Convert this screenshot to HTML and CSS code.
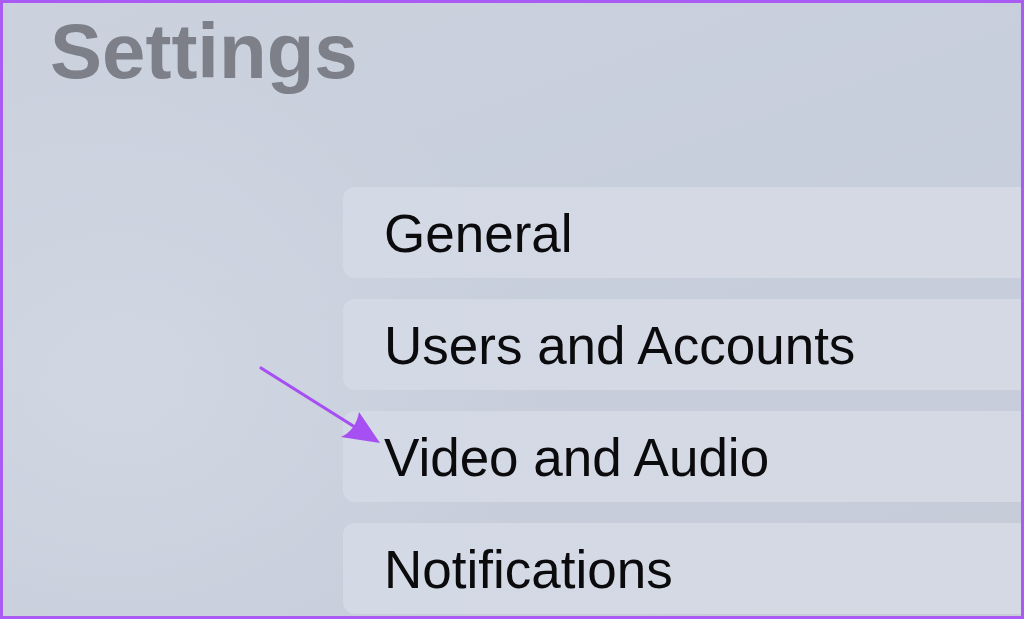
FILE: index.html
```html
<!DOCTYPE html>
<html lang="en">
<head>
<meta charset="utf-8">
<title>Settings</title>
<link rel="stylesheet" href="styles.css">
</head>
<body>
<div class="screen">
  <h1 class="title">Settings</h1>
  <ul class="menu">
    <li class="row">General</li>
    <li class="row">Users and Accounts</li>
    <li class="row">Video and Audio</li>
    <li class="row">Notifications</li>
  </ul>
  <svg class="arrow" width="1024" height="619" viewBox="0 0 1024 619" aria-hidden="true">
    <line x1="261" y1="368" x2="358" y2="429" stroke="#a64ff2" stroke-width="3.2" stroke-linecap="round"/>
    <path d="M380 443 L359 412 Q356 430 341 437 Z" fill="#a64ff2"/>
  </svg>
</div>
</body>
</html>
```
FILE: styles.css
```css
html, body {
  margin: 0;
  padding: 0;
}
body {
  width: 1024px;
  height: 619px;
  overflow: hidden;
  font-family: "Liberation Sans", Arial, sans-serif;
}
.screen {
  position: relative;
  box-sizing: border-box;
  width: 1024px;
  height: 619px;
  border: 3px solid #a95bf3;
  overflow: hidden;
  background:
    radial-gradient(ellipse 600px 500px at 120px 380px, rgba(214,221,232,0.6), rgba(214,221,232,0) 70%),
    linear-gradient(160deg, #cbd2de 0%, #c8cfdc 45%, #c6cbd8 100%);
}
.title {
  margin: 0;
  padding: 9px 0 0 47px;
  font-size: 78px;
  line-height: 78px;
  font-weight: 700;
  color: #7d8089;
  letter-spacing: 0;
}
.menu {
  list-style: none;
  margin: 0;
  padding: 0;
  position: absolute;
  left: 340px;
  top: 184px;
  right: -20px;
  display: flex;
  flex-direction: column;
  gap: 21px;
}
.row {
  box-sizing: border-box;
  height: 91px;
  padding: 1px 0 0 41px;
  line-height: 91px;
  font-size: 53px;
  color: #0b0b0d;
  background: linear-gradient(90deg, #d3d9e5 0%, #d4d9e4 60%, #d5d9e3 100%);
  border-radius: 12px;
  white-space: nowrap;
  overflow: hidden;
}
.arrow {
  position: absolute;
  left: -3px;
  top: -3px;
}
```
